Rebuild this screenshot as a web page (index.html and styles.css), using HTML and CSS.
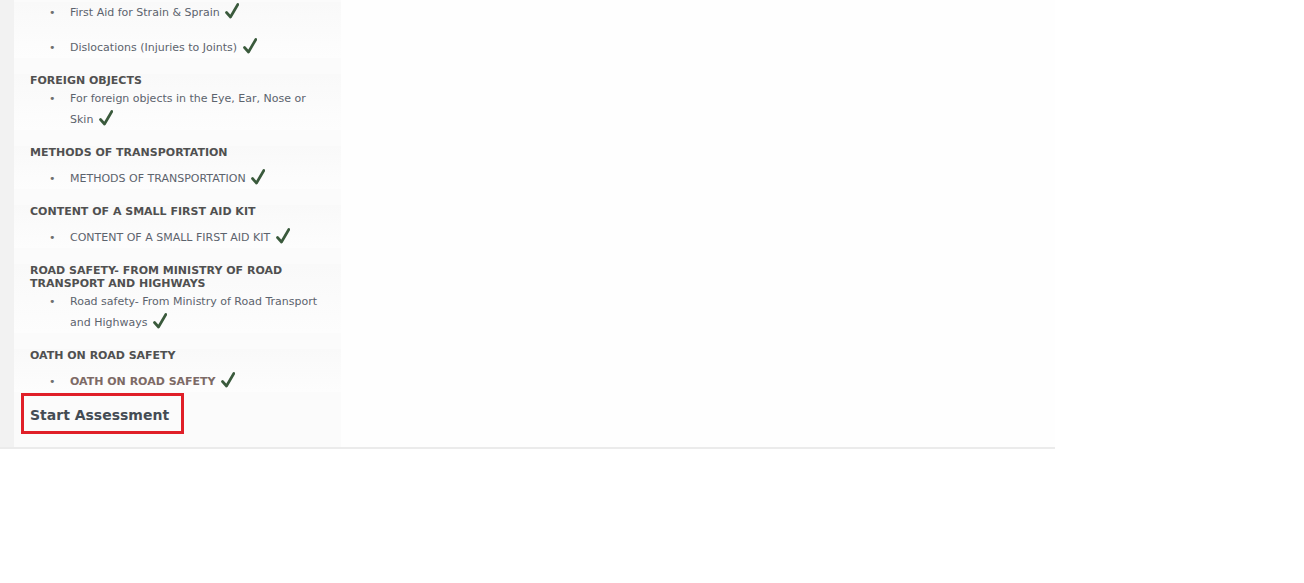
FILE: index.html
```html
<!DOCTYPE html>
<html lang="en">
<head>
  <meta charset="UTF-8">
  <meta name="viewport" content="width=device-width, initial-scale=1.0">
  <title>Course Contents</title>
  <link rel="stylesheet" href="styles.css">
</head>
<body>
  <div class="page">
    <div class="rail"></div>
    <div class="main">
      <div class="contents">
        <div class="section top">
          <ul>
            <li>First Aid for Strain &amp; Sprain <svg class="tick" viewBox="0 0 14 16"><path d="M1.5 9.5 L5.5 14 L12.8 1.5"/></svg></li>
            <li>Dislocations (Injuries to Joints) <svg class="tick" viewBox="0 0 14 16"><path d="M1.5 9.5 L5.5 14 L12.8 1.5"/></svg></li>
          </ul>
        </div>
        <div class="section wrap">
          <h4>FOREIGN OBJECTS</h4>
          <ul>
            <li>For foreign objects in the Eye, Ear, Nose or Skin <svg class="tick" viewBox="0 0 14 16"><path d="M1.5 9.5 L5.5 14 L12.8 1.5"/></svg></li>
          </ul>
        </div>
        <div class="section">
          <h4>METHODS OF TRANSPORTATION</h4>
          <ul>
            <li>METHODS OF TRANSPORTATION <svg class="tick" viewBox="0 0 14 16"><path d="M1.5 9.5 L5.5 14 L12.8 1.5"/></svg></li>
          </ul>
        </div>
        <div class="section">
          <h4>CONTENT OF A SMALL FIRST AID KIT</h4>
          <ul>
            <li>CONTENT OF A SMALL FIRST AID KIT <svg class="tick" viewBox="0 0 14 16"><path d="M1.5 9.5 L5.5 14 L12.8 1.5"/></svg></li>
          </ul>
        </div>
        <div class="section wrap">
          <h4>ROAD SAFETY- FROM MINISTRY OF ROAD TRANSPORT AND HIGHWAYS</h4>
          <ul>
            <li>Road safety- From Ministry of Road Transport and Highways <svg class="tick" viewBox="0 0 14 16"><path d="M1.5 9.5 L5.5 14 L12.8 1.5"/></svg></li>
          </ul>
        </div>
        <div class="section last">
          <h4>OATH ON ROAD SAFETY</h4>
          <ul>
            <li class="visited">OATH ON ROAD SAFETY <svg class="tick" viewBox="0 0 14 16"><path d="M1.5 9.5 L5.5 14 L12.8 1.5"/></svg></li>
          </ul>
        </div>
        <div class="assess">
          <a href="#" class="assess-btn">Start Assessment</a>
        </div>
      </div>
    </div>
  </div>
</body>
</html>
```

FILE: styles.css
```css
body {
  margin: 0;
  background: #ffffff;
  font-family: "DejaVu Sans", sans-serif;
  font-size: 11px;
}
.page {
  display: flex;
  width: 1055px;
  background: #fefefe;
  border-bottom: 2px solid #ebebeb;
}
.rail {
  width: 14px;
  background: #f2f2f2;
}
.main {
  flex: 1;
}
.contents {
  width: 327px;
  background: #fbfbfb;
  padding: 2px 0 13px;
}
.section {
  padding: 0 16px;
  margin-bottom: 16px;
  background: linear-gradient(#f9f9f9, #fdfdfd);
}
.section.last {
  margin-bottom: 0;
}
h4 {
  margin: 0;
  font-size: 11px;
  line-height: 13px;
  color: #505050;
  font-weight: bold;
}
ul {
  margin: 0;
  padding-left: 40px;
  list-style: disc;
  color: #5c636d;
}
li {
  line-height: 21px;
  padding-top: 9px;
  padding-right: 4px;
}
li::marker {
  content: "\2022\2003\00a0";
  color: #6f6f6f;
  font-weight: normal;
}
.section.wrap li {
  padding-top: 1px;
}
.section.top li {
  padding-top: 0;
}
.section.top li + li {
  padding-top: 14px;
}
li.visited {
  color: #7d6a66;
  font-weight: bold;
}
.tick {
  width: 14px;
  height: 16px;
  margin-left: 2px;
  vertical-align: -3px;
  fill: none;
  stroke: #3a5a3c;
  stroke-width: 2.7;
  stroke-linecap: round;
  stroke-linejoin: round;
}
.assess {
  padding: 1px 7px 0;
}
.assess-btn {
  display: inline-block;
  border: 3px solid #e01f28;
  padding: 9px 12px 6px 6px;
  font-size: 14px;
  font-weight: bold;
  color: #444c54;
  text-decoration: none;
  line-height: 20px;
}
```
